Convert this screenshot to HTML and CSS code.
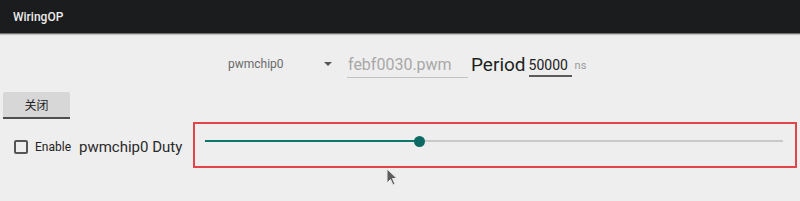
FILE: index.html
```html
<!DOCTYPE html>
<html>
<head>
<meta charset="utf-8">
<link rel="stylesheet" href="styles.css">
</head>
<body>
<div class="appbar"><span class="title">WiringOP</span></div>
<div class="content">
  <div class="row-top">
    <div class="spinner"><span class="spinner-text">pwmchip0</span><span class="spinner-arrow"></span></div>
    <div class="edit">febf0030.pwm</div>
    <span class="period">Period</span>
    <span class="period-value">50000</span>
    <span class="unit">ns</span>
  </div>
  <div class="row-btn">
    <button class="btn">关闭</button>
  </div>
  <div class="row-duty">
    <div class="left">
      <span class="checkbox"></span>
      <span class="enable">Enable</span>
      <span class="duty">pwmchip0 Duty</span>
    </div>
    <div class="highlight">
      <div class="slider">
        <div class="track"><div class="fill" style="width:214px"></div></div>
        <span class="thumb" style="left:214px"></span>
      </div>
    </div>
  </div>
</div>
<svg class="cursor" width="14" height="20" viewBox="0 0 14 20">
  <path d="M1 1 L1 15 L4.5 11.5 L7 17 L9 16 L6.5 10.5 L11 10.5 Z" fill="#3a3a3a" stroke="#e8e8e8" stroke-width="1"/>
</svg>
</body>
</html>
```
FILE: styles.css
```css
html, body {
  margin: 0;
  padding: 0;
}
body {
  width: 800px;
  height: 201px;
  background: #eeeeee;
  font-family: Roboto, "Noto Sans CJK SC", sans-serif;
  position: relative;
  overflow: hidden;
}
.appbar {
  height: 34px;
  background: #1b1c1d;
  border-bottom: 1px solid #6e6e6e;
  box-shadow: 0 1px 1px #c4c4c4;
  display: flex;
  align-items: center;
  padding-left: 13px;
  box-sizing: border-box;
}
.title {
  color: #ececec;
  font-size: 12px;
  font-weight: 500;
}
.content {
  padding-top: 10px;
}
.row-top {
  height: 40px;
  display: flex;
  align-items: center;
  padding-left: 228px;
}
.spinner {
  width: 104px;
  display: flex;
  align-items: center;
  justify-content: space-between;
  padding-right: 7px;
}
.spinner-text {
  font-size: 12px;
  color: #6a6a6a;
}
.spinner-arrow {
  width: 0;
  height: 0;
  border-left: 4px solid transparent;
  border-right: 4px solid transparent;
  border-top: 4px solid #555;
}
.edit {
  margin-left: 8px;
  width: 120px;
  font-size: 16px;
  color: #a8a8a8;
  border-bottom: 1px solid #c2c2c2;
  padding-bottom: 3px;
  margin-top: 4px;
  padding-left: 1px;
}
.period {
  margin-left: 3px;
  font-size: 19px;
  color: #1e1e1e;
}
.period-value {
  margin-left: 3px;
  font-size: 14px;
  color: #202020;
  border-bottom: 2px solid #5a5a5a;
  padding-bottom: 2px;
  margin-top: 6px;
  width: 43px;
}
.unit {
  margin-left: 3px;
  font-size: 11px;
  color: #9a9a9a;
  margin-top: 2px;
}
.row-btn {
  margin-top: 8px;
  padding-left: 3px;
  display: flex;
}
.btn {
  width: 67px;
  height: 27px;
  background: #d7d7d7;
  border: none;
  border-bottom: 2px solid #4e4e4e;
  border-radius: 2px 2px 0 0;
  font-family: "Noto Sans CJK SC", sans-serif;
  font-size: 12px;
  color: #222;
  padding: 0;
}
.row-duty {
  margin-top: 3px;
  height: 46px;
  display: flex;
  align-items: stretch;
}
.left {
  display: flex;
  align-items: center;
  padding-left: 14px;
  padding-top: 4px;
  width: 193px;
  flex-shrink: 0;
  white-space: nowrap;
  box-sizing: border-box;
}
.checkbox {
  width: 10px;
  height: 10px;
  border: 2px solid #555;
  border-radius: 2px;
  flex-shrink: 0;
}
.enable {
  margin-left: 7px;
  font-size: 12px;
  color: #222;
}
.duty {
  margin-left: 8px;
  font-size: 15px;
  color: #2a2a2a;
}
.highlight {
  width: 604px;
  flex-shrink: 0;
  border: 2px solid #e2444a;
  box-sizing: border-box;
  padding: 12px 12px 0 10px;
}
.slider {
  position: relative;
  height: 10px;
  display: flex;
  align-items: center;
}
.track {
  flex: 1;
  height: 2px;
  background: #c9c9c9;
}
.fill {
  height: 2px;
  background: #0e766d;
}
.thumb {
  position: absolute;
  top: 0;
  width: 11px;
  height: 11px;
  margin-left: -5px;
  margin-top: -0.5px;
  border-radius: 50%;
  background: #0c6a62;
}
.cursor {
  position: absolute;
  left: 386px;
  top: 168px;
  opacity: 0.8;
}
```
